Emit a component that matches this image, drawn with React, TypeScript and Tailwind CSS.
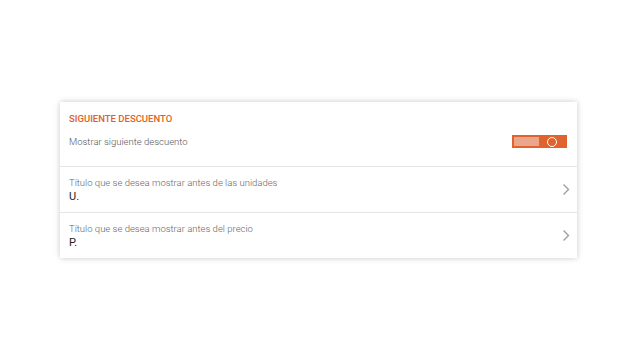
import React from "react";

const rows = [
  { label: "Título que se desea mostrar antes de las unidades", value: "U." },
  { label: "Título que se desea mostrar antes del precio", value: "P." },
];

const Chevron = () => (
  <svg width="8" height="13" viewBox="0 0 8 13" fill="none">
    <path d="M1.5 1.5 L6.5 6.5 L1.5 11.5" stroke="#9e9e9e" strokeWidth="1.4" />
  </svg>
);

const Toggle = () => (
  <div className="flex h-[13px] w-[55px] bg-[#e0622c] p-[2px]">
    <div className="h-full w-[25px] bg-[#eaa58a]" />
    <div className="flex flex-1 items-center justify-center">
      <div className="h-[10px] w-[10px] rounded-full border-[1.5px] border-white" />
    </div>
  </div>
);

export default function App() {
  return (
    <div
      className="h-[361px] w-[637px] bg-white pt-[102px] pl-[60px]"
      style={{ fontFamily: "Roboto, 'Liberation Sans', sans-serif" }}
    >
      <div className="w-[517px] bg-white shadow-[0_0_6px_rgba(0,0,0,0.22)]">
        <div className="pl-[9px] pr-[10px] pt-[11px] pb-[18px]">
          <div className="text-[9.5px] font-medium leading-[12px] text-[#e0602a]">
            SIGUIENTE DESCUENTO
          </div>
          <div className="mt-[10px] flex items-center justify-between">
            <span className="text-[9.5px] font-light leading-[12px] text-[#555]">
              Mostrar siguiente descuento
            </span>
            <Toggle />
          </div>
        </div>
        {rows.map((r) => (
          <div
            key={r.value}
            className="flex h-[46px] items-center justify-between border-t border-[#e6e6e6] pl-[9px] pr-[7px]"
          >
            <div className="flex flex-col">
              <span className="text-[9.5px] font-light leading-[12px] text-[#666]">{r.label}</span>
              <span className="mt-[1px] text-[11px] leading-[13px] text-[#222]">{r.value}</span>
            </div>
            <Chevron />
          </div>
        ))}
      </div>
    </div>
  );
}
